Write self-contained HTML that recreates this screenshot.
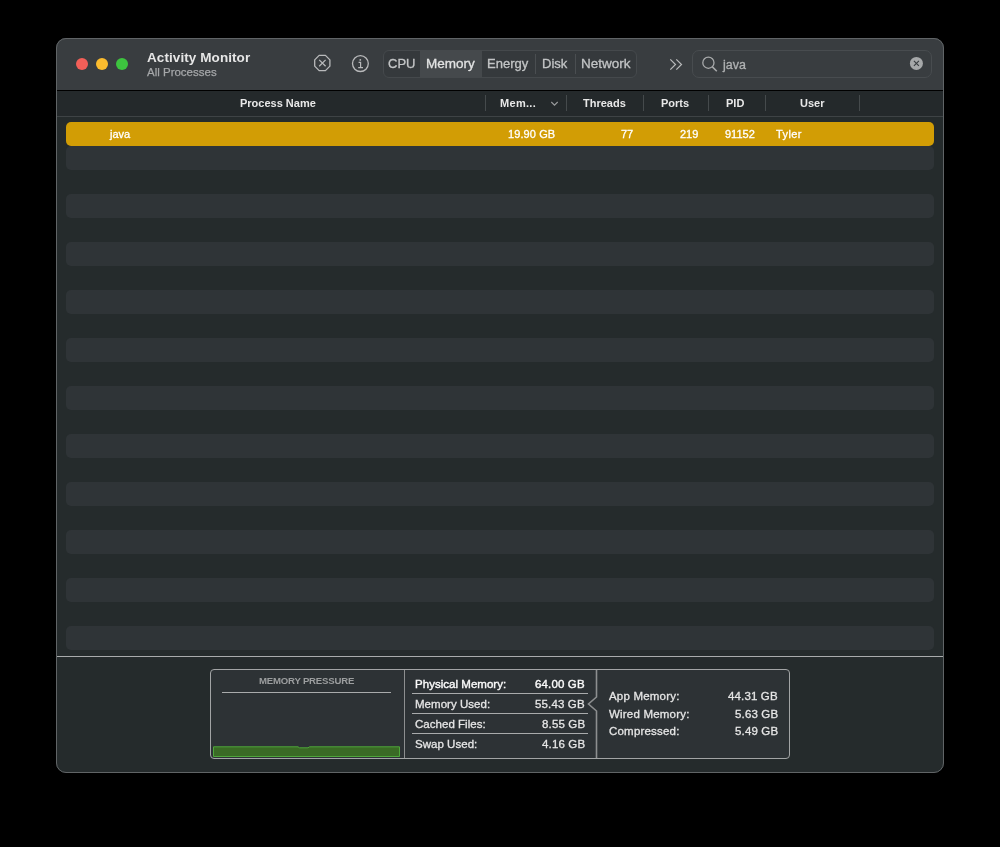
<!DOCTYPE html>
<html><head><meta charset="utf-8"><style>
*{margin:0;padding:0;box-sizing:border-box}
html,body{width:1000px;height:847px;background:#000;overflow:hidden;font-family:"Liberation Sans",sans-serif}
.a{position:absolute}
.t{position:absolute;white-space:nowrap;line-height:1;will-change:transform}
#win{position:absolute;left:56px;top:38px;width:888px;height:735px;border-radius:10px;background:#252b2c;overflow:hidden}
#winb{position:absolute;left:56px;top:38px;width:888px;height:735px;border-radius:10px;border:1px solid #606466}
.dot{position:absolute;width:12px;height:12px;border-radius:50%;top:58px}
.sep{position:absolute;top:95px;width:1px;height:16px;background:#454a4c}
.row{position:absolute;left:66px;width:868px;height:24px;border-radius:5px;background:#2f3437}
.hl{position:absolute;height:1px;background:#a9abac}
</style></head><body>
<div id="win">
<div class="a" style="left:0;top:0;width:888px;height:52px;background:#393d40"></div>
<div class="a" style="left:0;top:52px;width:888px;height:1px;background:#000"></div>
<div class="a" style="left:0;top:53px;width:888px;height:25px;background:#24292b"></div>
<div class="a" style="left:0;top:78px;width:888px;height:1px;background:#3e4345"></div>
<div class="a" style="left:0;top:618px;width:888px;height:1px;background:#a9abac"></div>
</div>
<div class="dot" style="left:76px;background:#f25f58"></div>
<div class="dot" style="left:96px;background:#fbbc2e"></div>
<div class="dot" style="left:116px;background:#3dc43f"></div>
<div class="t" style="left:147px;top:51px;font-size:13.5px;font-weight:bold;color:#e6e6e6;letter-spacing:0.08px">Activity Monitor</div>
<div class="t" style="left:147px;top:67px;font-size:11.5px;color:#a5a7a9;-webkit-text-stroke:0.25px #a5a7a9">All Processes</div>
<svg class="a" style="left:310px;top:51px" width="24" height="24" viewBox="0 0 24 24">
<polygon points="15.45,4.40 19.90,8.85 19.90,15.15 15.45,19.60 9.15,19.60 4.70,15.15 4.70,8.85 9.15,4.40" fill="none" stroke="#b9babb" stroke-width="1.3" stroke-linejoin="round"/>
<path d="M9.2,8.9 L15.6,15.3 M15.6,8.9 L9.2,15.3" stroke="#b9babb" stroke-width="1.25" fill="none"/>
</svg>
<svg class="a" style="left:348px;top:51px" width="24" height="24" viewBox="0 0 24 24">
<circle cx="12.4" cy="12.6" r="7.9" fill="none" stroke="#b9babb" stroke-width="1.3"/>
<circle cx="12.3" cy="8.9" r="0.9" fill="#b9babb"/>
<path d="M10.6,11.4 H12.6 V16.6 M10.2,16.6 H15" stroke="#b9babb" stroke-width="1.2" fill="none"/>
</svg>
<div class="a" style="left:383px;top:50px;width:254px;height:28px;border-radius:6px;border:1px solid #45494c;background:#35393c"></div>
<div class="a" style="left:420px;top:50px;width:62px;height:28px;background:#45494c"></div>
<div class="a" style="left:535px;top:54px;width:1px;height:20px;background:#4a4e51"></div>
<div class="a" style="left:575px;top:54px;width:1px;height:20px;background:#4a4e51"></div>
<div class="t" style="left:388px;top:57.00px;font-size:13px;font-weight:normal;color:#c3c5c6;-webkit-text-stroke:0.3px #c3c5c6;">CPU</div>
<div class="t" style="left:426px;top:56.57px;font-size:13.5px;font-weight:normal;color:#e2e3e3;-webkit-text-stroke:0.3px #e2e3e3;">Memory</div>
<div class="t" style="left:487px;top:57.00px;font-size:13px;font-weight:normal;color:#c3c5c6;-webkit-text-stroke:0.3px #c3c5c6;">Energy</div>
<div class="t" style="left:542px;top:57.00px;font-size:13px;font-weight:normal;color:#c3c5c6;-webkit-text-stroke:0.3px #c3c5c6;">Disk</div>
<div class="t" style="left:581px;top:56.57px;font-size:13.5px;font-weight:normal;color:#c3c5c6;-webkit-text-stroke:0.3px #c3c5c6;">Network</div>
<svg class="a" style="left:668px;top:57px" width="16" height="15" viewBox="0 0 16 15">
<path d="M2.3,2.3 L7.5,7.5 L2.3,12.7 M8.3,2.3 L13.5,7.5 L8.3,12.7" stroke="#b9babb" stroke-width="1.2" fill="none"/>
</svg>
<div class="a" style="left:692px;top:50px;width:240px;height:28px;border-radius:7px;border:1px solid #484c4f;background:#393d40"></div>
<svg class="a" style="left:700px;top:54px" width="20" height="20" viewBox="0 0 20 20">
<circle cx="8.4" cy="8.7" r="5.6" fill="none" stroke="#a9abac" stroke-width="1.3"/>
<path d="M12.4,12.9 L16.8,17.3" stroke="#a9abac" stroke-width="1.5" fill="none"/>
</svg>
<div class="t" style="left:723px;top:58.92px;font-size:12.5px;font-weight:normal;color:#b0b2b3;-webkit-text-stroke:0.3px #b0b2b3;">java</div>
<svg class="a" style="left:908px;top:55px" width="17" height="17" viewBox="0 0 17 17">
<circle cx="8.4" cy="8.4" r="6.5" fill="#a6a8a9"/>
<path d="M5.9,5.9 L10.9,10.9 M10.9,5.9 L5.9,10.9" stroke="#393d40" stroke-width="1.1" fill="none"/>
</svg>
<div class="t" style="left:240px;top:97.69px;font-size:11px;font-weight:bold;color:#e8e8e8;">Process Name</div>
<div class="t" style="left:500px;top:97.69px;font-size:11px;font-weight:bold;color:#e8e8e8;letter-spacing:0.3px;">Mem...</div>
<svg class="a" style="left:549px;top:99px" width="12" height="10" viewBox="0 0 12 10">
<path d="M2.3,3 L5.5,6.2 L8.7,3" stroke="#9a9c9d" stroke-width="1.1" fill="none"/>
</svg>
<div class="t" style="left:583px;top:97.69px;font-size:11px;font-weight:bold;color:#e8e8e8;">Threads</div>
<div class="t" style="left:661px;top:97.69px;font-size:11px;font-weight:bold;color:#e8e8e8;">Ports</div>
<div class="t" style="left:726px;top:97.69px;font-size:11px;font-weight:bold;color:#e8e8e8;">PID</div>
<div class="t" style="left:800px;top:97.69px;font-size:11px;font-weight:bold;color:#e8e8e8;">User</div>
<div class="sep" style="left:485px"></div>
<div class="sep" style="left:566px"></div>
<div class="sep" style="left:643px"></div>
<div class="sep" style="left:708px"></div>
<div class="sep" style="left:765px"></div>
<div class="sep" style="left:859px"></div>
<div class="row" style="top:122px;background:#d29d05"></div>
<div class="row" style="top:146px"></div>
<div class="row" style="top:194px"></div>
<div class="row" style="top:242px"></div>
<div class="row" style="top:290px"></div>
<div class="row" style="top:338px"></div>
<div class="row" style="top:386px"></div>
<div class="row" style="top:434px"></div>
<div class="row" style="top:482px"></div>
<div class="row" style="top:530px"></div>
<div class="row" style="top:578px"></div>
<div class="row" style="top:626px"></div>
<div class="t" style="left:110px;top:128.69px;font-size:11px;font-weight:normal;color:#ffffff;-webkit-text-stroke:0.3px #ffffff;">java</div>
<div class="t" style="right:444.5px;top:128.69px;font-size:11px;font-weight:normal;color:#ffffff;text-align:right;letter-spacing:0.1px;margin-right:-0.1px;-webkit-text-stroke:0.3px #ffffff;">19.90 GB</div>
<div class="t" style="right:367px;top:128.69px;font-size:11px;font-weight:normal;color:#ffffff;text-align:right;-webkit-text-stroke:0.3px #ffffff;">77</div>
<div class="t" style="right:302px;top:128.69px;font-size:11px;font-weight:normal;color:#ffffff;text-align:right;-webkit-text-stroke:0.3px #ffffff;">219</div>
<div class="t" style="right:245px;top:128.69px;font-size:11px;font-weight:normal;color:#ffffff;text-align:right;-webkit-text-stroke:0.3px #ffffff;">91152</div>
<div class="t" style="left:776px;top:128.69px;font-size:11px;font-weight:normal;color:#ffffff;letter-spacing:0.4px;-webkit-text-stroke:0.3px #ffffff;">Tyler</div>
<div class="a" style="left:210px;top:669px;width:580px;height:90px;border-radius:4px;border:1px solid #a2a4a5;background:#2d3235"></div>
<div class="t" style="left:258.7px;top:676.17px;font-size:9.6px;font-weight:bold;color:#9c9e9f;letter-spacing:-0.2px;">MEMORY PRESSURE</div>
<div class="hl" style="left:222px;top:692px;width:169px"></div>
<svg class="a" style="left:212px;top:744px" width="190" height="15" viewBox="0 0 190 15">
<path d="M1.5,2.8 H86 L87.5,3.8 H96 L97.5,2.8 H187.5 V12.5 H1.5 Z" fill="#3a6a25" stroke="#4ea63a" stroke-width="1" stroke-linejoin="round"/>
</svg>
<div class="a" style="left:403.5px;top:670px;width:1.6px;height:88px;background:#8d8f90"></div>
<svg class="a" style="left:580px;top:669px" width="30" height="90" viewBox="0 0 30 90">
<path d="M16.5,1 V28 L8.5,35 L16.5,42 V89" stroke="#8d8f90" stroke-width="1.6" fill="none"/>
</svg>
<div class="t" style="left:415px;top:679.27px;font-size:11.5px;font-weight:normal;color:#fafafa;letter-spacing:0.03px;-webkit-text-stroke:0.4px #fafafa;">Physical Memory:</div>
<div class="t" style="right:415px;top:679.27px;font-size:11.5px;font-weight:normal;color:#fafafa;text-align:right;letter-spacing:0.15px;margin-right:-0.15px;-webkit-text-stroke:0.4px #fafafa;">64.00 GB</div>
<div class="t" style="left:415px;top:699.27px;font-size:11.5px;font-weight:normal;color:#e6e6e6;letter-spacing:0.03px;-webkit-text-stroke:0.3px #e6e6e6;">Memory Used:</div>
<div class="t" style="right:415px;top:699.27px;font-size:11.5px;font-weight:normal;color:#e6e6e6;text-align:right;letter-spacing:0.15px;margin-right:-0.15px;-webkit-text-stroke:0.3px #e6e6e6;">55.43 GB</div>
<div class="t" style="left:415px;top:719.27px;font-size:11.5px;font-weight:normal;color:#e6e6e6;letter-spacing:0.03px;-webkit-text-stroke:0.3px #e6e6e6;">Cached Files:</div>
<div class="t" style="right:415px;top:719.27px;font-size:11.5px;font-weight:normal;color:#e6e6e6;text-align:right;letter-spacing:0.15px;margin-right:-0.15px;-webkit-text-stroke:0.3px #e6e6e6;">8.55 GB</div>
<div class="t" style="left:415px;top:739.27px;font-size:11.5px;font-weight:normal;color:#e6e6e6;letter-spacing:0.03px;-webkit-text-stroke:0.3px #e6e6e6;">Swap Used:</div>
<div class="t" style="right:415px;top:739.27px;font-size:11.5px;font-weight:normal;color:#e6e6e6;text-align:right;letter-spacing:0.15px;margin-right:-0.15px;-webkit-text-stroke:0.3px #e6e6e6;">4.16 GB</div>
<div class="hl" style="left:412px;top:693px;width:176px"></div>
<div class="hl" style="left:412px;top:713px;width:176px"></div>
<div class="hl" style="left:412px;top:733px;width:176px"></div>
<div class="t" style="left:609px;top:690.57px;font-size:11.5px;font-weight:normal;color:#e6e6e6;letter-spacing:0.2px;-webkit-text-stroke:0.3px #e6e6e6;">App Memory:</div>
<div class="t" style="right:222px;top:690.57px;font-size:11.5px;font-weight:normal;color:#e6e6e6;text-align:right;letter-spacing:0.15px;margin-right:-0.15px;-webkit-text-stroke:0.3px #e6e6e6;">44.31 GB</div>
<div class="t" style="left:609px;top:708.52px;font-size:11.5px;font-weight:normal;color:#e6e6e6;letter-spacing:0.2px;-webkit-text-stroke:0.3px #e6e6e6;">Wired Memory:</div>
<div class="t" style="right:222px;top:708.52px;font-size:11.5px;font-weight:normal;color:#e6e6e6;text-align:right;letter-spacing:0.15px;margin-right:-0.15px;-webkit-text-stroke:0.3px #e6e6e6;">5.63 GB</div>
<div class="t" style="left:609px;top:726.47px;font-size:11.5px;font-weight:normal;color:#e6e6e6;letter-spacing:0.2px;-webkit-text-stroke:0.3px #e6e6e6;">Compressed:</div>
<div class="t" style="right:222px;top:726.47px;font-size:11.5px;font-weight:normal;color:#e6e6e6;text-align:right;letter-spacing:0.15px;margin-right:-0.15px;-webkit-text-stroke:0.3px #e6e6e6;">5.49 GB</div>
<div id="winb" class="a"></div>
</body></html>
